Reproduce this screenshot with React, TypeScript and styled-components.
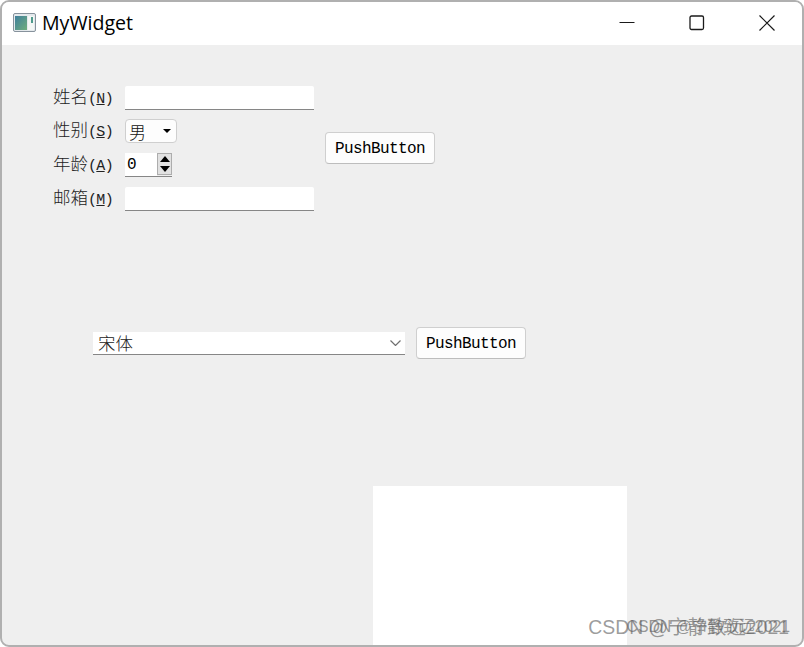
import React from "react";
import styled, { createGlobalStyle } from "styled-components";

const monoStack = `"Liberation Mono", "Noto Sans CJK SC", monospace`;

const fields = [
  { label: "姓名", key: "N", kind: "line" },
  { label: "性别", key: "S", kind: "combo" },
  { label: "年龄", key: "A", kind: "spin" },
  { label: "邮箱", key: "M", kind: "line" },
];

export default function App() {
  return (
    <Window>
      <GlobalStyle />
      <TitleBar>
        <AppIcon />
        <Title>MyWidget</Title>
        <WindowControls>
          <ControlButton>
            <svg width="16" height="16" viewBox="0 0 16 16">
              <path d="M0.5 7.5H15.5" stroke="#1a1a1a" strokeWidth="1" />
            </svg>
          </ControlButton>
          <ControlButton>
            <svg width="16" height="16" viewBox="0 0 16 16" fill="none">
              <rect x="1" y="1" width="13.5" height="13.5" rx="1.5" stroke="#1a1a1a" strokeWidth="1.3" />
            </svg>
          </ControlButton>
          <ControlButton>
            <svg width="16" height="16" viewBox="0 0 16 16" fill="none">
              <path d="M0.5 0.5L15.5 15.5M15.5 0.5L0.5 15.5" stroke="#1a1a1a" strokeWidth="1.2" />
            </svg>
          </ControlButton>
        </WindowControls>
      </TitleBar>
      <Content>
        <FormRow>
          <FormGrid>
            {fields.map((field) => (
              <React.Fragment key={field.key}>
                <FieldLabel>
                  {field.label}
                  <Mnemonic>
                    (<u>{field.key}</u>)
                  </Mnemonic>
                </FieldLabel>
                {field.kind === "line" && <LineEdit />}
                {field.kind === "combo" && (
                  <SmallCombo>
                    男
                    <ComboCaret />
                  </SmallCombo>
                )}
                {field.kind === "spin" && (
                  <SpinBox>
                    <SpinValue>0</SpinValue>
                    <SpinButtons>
                      <SpinButton>
                        <svg width="10" height="6" viewBox="0 0 10 6">
                          <path d="M5 0L10 6H0Z" fill="#000" />
                        </svg>
                      </SpinButton>
                      <SpinButton>
                        <svg width="10" height="6" viewBox="0 0 10 6">
                          <path d="M0 0H10L5 6Z" fill="#000" />
                        </svg>
                      </SpinButton>
                    </SpinButtons>
                  </SpinBox>
                )}
              </React.Fragment>
            ))}
          </FormGrid>
          <PushButton>PushButton</PushButton>
        </FormRow>
        <FontRow>
          <FontCombo>
            宋体
            <svg width="11" height="6" viewBox="0 0 11 6" fill="none">
              <path d="M0.5 0.5L5.5 5.5L10.5 0.5" stroke="#707070" strokeWidth="1.2" />
            </svg>
          </FontCombo>
          <PushButton>PushButton</PushButton>
        </FontRow>
        <Canvas />
      </Content>
      <Watermark>CSDN @宁静致远2021</Watermark>
      <WatermarkEcho>CSDN @宁静致远2021</WatermarkEcho>
    </Window>
  );
}

function AppIcon() {
  return (
    <svg width="24" height="20" viewBox="0 0 24 20">
      <defs>
        <linearGradient id="pane" x1="0" y1="0" x2="1" y2="1">
          <stop offset="0" stopColor="#3f7f9c" />
          <stop offset="1" stopColor="#6fae7c" />
        </linearGradient>
      </defs>
      <rect x="0.5" y="0.5" width="22" height="18" rx="1.5" fill="#e4e9ec" stroke="#87929c" />
      <rect x="2" y="3" width="12" height="14" fill="url(#pane)" />
      <rect x="15" y="3" width="6" height="14" fill="#f4f7f5" />
      <rect x="18" y="4" width="2" height="6" fill="#4f9a8c" />
    </svg>
  );
}

const GlobalStyle = createGlobalStyle`
  html,
  body {
    margin: 0;
    padding: 0;
    background: #ffffff;
  }
`;

const Window = styled.div`
  position: relative;
  box-sizing: border-box;
  display: flex;
  flex-direction: column;
  width: 804px;
  height: 647px;
  overflow: hidden;
  border: 2px solid #b0b0b0;
  border-radius: 9px;
  background: #efefef;
`;

const TitleBar = styled.div`
  display: flex;
  align-items: center;
  flex-shrink: 0;
  height: 43px;
  padding-left: 11px;
  padding-bottom: 2px;
  box-sizing: border-box;
  background: #ffffff;
`;

const Title = styled.div`
  margin-left: 5px;
  font-family: "Open Sans", sans-serif;
  font-size: 19.6px;
  color: #000000;
`;

const WindowControls = styled.div`
  display: flex;
  margin-left: auto;
`;

const ControlButton = styled.div`
  display: flex;
  align-items: center;
  justify-content: center;
  width: 70px;
  height: 41px;
`;

const Content = styled.div`
  display: flex;
  flex: 1;
  flex-direction: column;
  align-items: flex-start;
  padding-top: 40px;
  min-height: 0;
`;

const FormRow = styled.div`
  display: flex;
  align-items: center;
  gap: 11px;
  margin-left: 51px;
`;

const FormGrid = styled.div`
  display: grid;
  grid-template-columns: 72px 189px;
  grid-template-rows: 25px 24px 25px 25px;
  row-gap: 9px;
  align-items: end;
  justify-items: start;
`;

const FieldLabel = styled.div`
  align-self: center;
  font-family: "Noto Sans CJK SC", sans-serif;
  font-size: 17.5px;
  font-weight: 300;
  line-height: 24px;
  white-space: nowrap;
  color: #222222;
`;

const Mnemonic = styled.span`
  font-family: ${monoStack};
  font-size: 15px;
  letter-spacing: -0.7px;
`;

const LineEdit = styled.input`
  box-sizing: border-box;
  width: 189px;
  height: 24px;
  padding: 0;
  border: 0;
  border-bottom: 1px solid #868686;
  border-radius: 2px 2px 0 0;
  background: #ffffff;
`;

const SmallCombo = styled.div`
  display: flex;
  align-items: center;
  box-sizing: border-box;
  width: 52px;
  height: 24px;
  padding-left: 3px;
  border: 1px solid #cfcfcf;
  border-radius: 4px;
  background: #fdfdfd;
  font-family: "Noto Sans CJK SC", sans-serif;
  font-size: 17px;
  font-weight: 300;
  color: #111111;
`;

const ComboCaret = styled.span`
  margin-left: auto;
  margin-right: 5px;
  border-top: 4px solid #000000;
  border-right: 4px solid transparent;
  border-left: 4px solid transparent;
`;

const SpinBox = styled.div`
  display: flex;
  align-items: stretch;
  box-sizing: border-box;
  width: 47px;
  height: 24px;
  border-bottom: 1px solid #868686;
  background: #efefef;
`;

const SpinValue = styled.div`
  width: 32px;
  padding-left: 2px;
  box-sizing: border-box;
  background: #ffffff;
  font-family: ${monoStack};
  font-size: 16px;
  line-height: 25px;
  color: #000000;
`;

const SpinButtons = styled.div`
  display: flex;
  flex-direction: column;
  box-sizing: border-box;
  width: 15px;
  height: 22px;
  border: 1px solid #adadad;
`;

const SpinButton = styled.div`
  display: flex;
  flex: 1;
  align-items: center;
  justify-content: center;
  background: #e1e1e1;
`;

const PushButton = styled.button`
  box-sizing: border-box;
  width: 110px;
  height: 32px;
  padding: 1px 0 0;
  border: 1px solid #cfcfcf;
  border-bottom-color: #bdbdbd;
  border-radius: 4px;
  background: #fdfdfd;
  font-family: ${monoStack};
  font-size: 16px;
  letter-spacing: -0.6px;
  color: #000000;
`;

const FontRow = styled.div`
  display: flex;
  align-items: center;
  gap: 11px;
  margin-top: 116px;
  margin-left: 91px;
`;

const FontCombo = styled.div`
  display: flex;
  align-items: center;
  justify-content: space-between;
  box-sizing: border-box;
  width: 312px;
  height: 23px;
  padding: 0 4px 0 5px;
  border-bottom: 1px solid #868686;
  background: #ffffff;
  font-family: "Noto Sans CJK SC", sans-serif;
  font-size: 17.5px;
  font-weight: 300;
  color: #222222;
`;

const Canvas = styled.div`
  flex: 1;
  width: 254px;
  margin-top: 127px;
  margin-left: 371px;
  background: #ffffff;
`;

const Watermark = styled.div`
  position: absolute;
  right: 13px;
  bottom: 6px;
  font-family: "Liberation Sans", "Noto Sans CJK SC", sans-serif;
  font-size: 19.4px;
  line-height: 24px;
  white-space: nowrap;
  color: rgba(90, 90, 90, 0.6);
`;

const WatermarkEcho = styled(Watermark)`
  right: 12px;
  font-size: 15.8px;
`;
